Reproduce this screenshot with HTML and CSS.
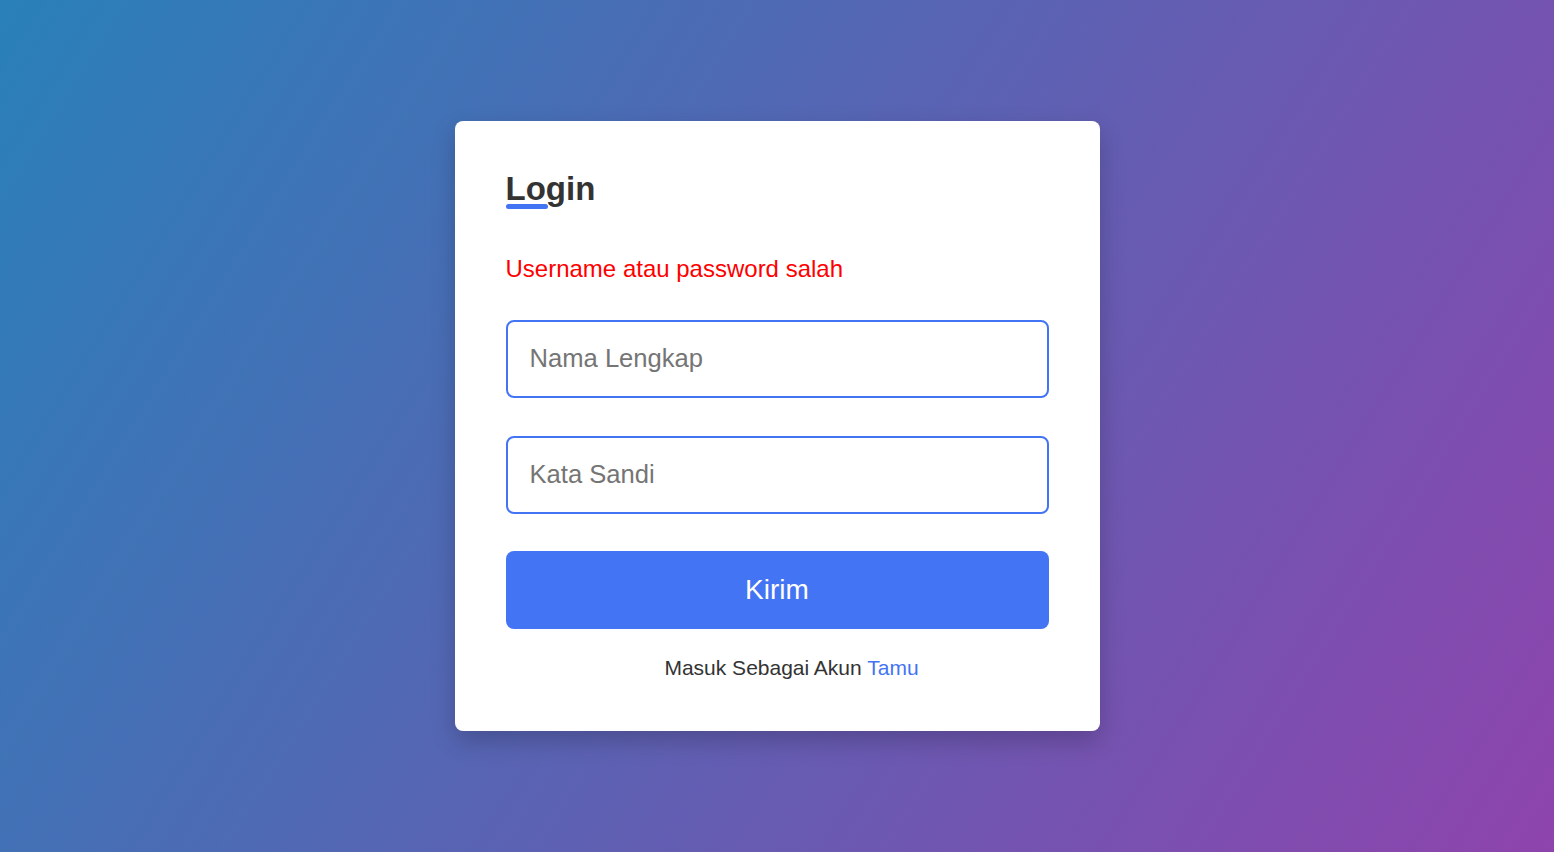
FILE: index.html
```html
<!DOCTYPE html>
<html lang="id">
<head>
<meta charset="utf-8">
<title>Login</title>
<link rel="stylesheet" href="styles.css">
</head>
<body>
  <main class="card">
    <h1 class="title">Login</h1>
    <p class="error">Username atau password salah</p>
    <form class="form">
      <input class="field" type="text" placeholder="Nama Lengkap">
      <input class="field" type="password" placeholder="Kata Sandi">
      <button class="submit" type="button">Kirim</button>
    </form>
    <p class="guest">Masuk Sebagai Akun <a class="guest-link" href="#">Tamu</a></p>
  </main>
</body>
</html>
```

FILE: styles.css
```css
* {
  box-sizing: border-box;
}

html, body {
  margin: 0;
  height: 100%;
}

body {
  min-height: 100vh;
  display: flex;
  align-items: center;
  justify-content: center;
  background: linear-gradient(122deg, #2980b9, #8e44ad);
  font-family: "Liberation Sans", Arial, sans-serif;
  color: #333;
}

.card {
  width: 645px;
  background: #fff;
  border-radius: 8px;
  padding: 48px 51px 51px;
  box-shadow: 0 10px 25px rgba(0, 0, 0, 0.2);
  display: flex;
  flex-direction: column;
}

.title {
  position: relative;
  margin: 0;
  font-size: 33px;
  line-height: 40px;
  font-weight: 700;
  color: #333;
  align-self: flex-start;
}

.title::after {
  content: "";
  position: absolute;
  left: 0;
  bottom: 0;
  width: 42px;
  height: 5px;
  border-radius: 3px;
  background: #4374f4;
}

.error {
  margin: 45px 0 0;
  font-size: 24px;
  line-height: 30px;
  color: #ff0000;
}

.form {
  margin-top: 36px;
  display: flex;
  flex-direction: column;
}

.field {
  height: 78px;
  width: 100%;
  border: 2px solid #4374f4;
  border-radius: 8px;
  padding: 0 22px 2px;
  font-family: "Liberation Sans", Arial, sans-serif;
  font-size: 25.6px;
  color: #333;
  outline: none;
  margin-bottom: 38px;
}

.field + .field {
  margin-bottom: 37px;
}

.field::placeholder {
  color: #757575;
}

.submit {
  height: 78px;
  width: 100%;
  border: none;
  border-radius: 8px;
  background: #4374f4;
  color: #fff;
  font-family: "Liberation Sans", Arial, sans-serif;
  font-size: 28px;
  cursor: pointer;
}

.guest {
  margin: 27px 0 0;
  padding-left: 29px;
  text-align: center;
  font-size: 21px;
  line-height: 24px;
  color: #333;
}

.guest-link {
  color: #4374f4;
  text-decoration: none;
}
```
